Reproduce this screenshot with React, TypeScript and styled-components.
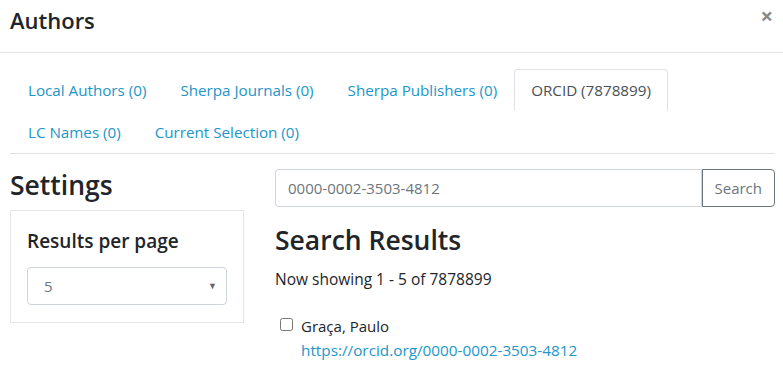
import styled, { createGlobalStyle } from "styled-components";

const Global = createGlobalStyle`
  body {
    margin: 0;
    background: #fff;
    font-family: "Open Sans", "Noto Sans", sans-serif;
    color: #212529;
  }
`;

const tabs = [
  ["Local Authors (0)", "Sherpa Journals (0)", "Sherpa Publishers (0)", "ORCID (7878899)"],
  ["LC Names (0)", "Current Selection (0)"],
];

export default function App() {
  return (
    <>
      <Global />
      <Modal>
        <Header>
          <Title>Authors</Title>
          <Close>×</Close>
        </Header>
        <Body>
          <Tabs>
            {tabs.map((row, i) => (
              <TabRow key={i}>
                {row.map((t) => (
                  <Tab key={t} $active={t.startsWith("ORCID")}>
                    {t}
                  </Tab>
                ))}
              </TabRow>
            ))}
          </Tabs>
          <Columns>
            <div>
              <Heading>Settings</Heading>
              <Card>
                <CardTitle>Results per page</CardTitle>
                <Select>
                  <span>5</span>
                  <Caret>▼</Caret>
                </Select>
              </Card>
            </div>
            <div>
              <SearchGroup>
                <SearchInput defaultValue="0000-0002-3503-4812" />
                <SearchButton>Search</SearchButton>
              </SearchGroup>
              <Heading>Search Results</Heading>
              <Showing>Now showing 1 - 5 of 7878899</Showing>
              <Result>
                <Check type="checkbox" />
                <div>
                  <Name>Graça, Paulo</Name>
                  <ResultLink href="#">https://orcid.org/0000-0002-3503-4812</ResultLink>
                </div>
              </Result>
            </div>
          </Columns>
        </Body>
      </Modal>
    </>
  );
}

const Modal = styled.div`
  width: 783px;
  height: 377px;
  overflow: hidden;
`;

const Header = styled.div`
  display: flex;
  justify-content: space-between;
  align-items: flex-start;
  height: 53px;
  padding: 0 10px;
  border-bottom: 1px solid #e5e5e5;
  box-sizing: border-box;
`;

const Title = styled.h5`
  margin: 4px 0 0;
  font-size: 22px;
  font-weight: 600;
  line-height: 32px;
`;

const Close = styled.span`
  font-size: 22px;
  line-height: 30px;
  font-weight: 700;
  color: #888;
`;

const Body = styled.div`
  padding: 16px 8px 0 10px;
`;

const Tabs = styled.div`
  border-bottom: 1px solid #dee2e6;
  padding-left: 1px;
`;

const TabRow = styled.div`
  display: flex;
`;

const Tab = styled.a<{ $active?: boolean }>`
  display: block;
  padding: 8px 16px;
  line-height: 24px;
  font-size: 15.2px;
  border: 1px solid ${(p) => (p.$active ? "#dee2e6" : "transparent")};
  border-bottom-color: transparent;
  border-radius: 4px 4px 0 0;
  color: ${(p) => (p.$active ? "#495057" : "#2196c9")};
  background: #fff;
`;

const Columns = styled.div`
  display: grid;
  grid-template-columns: 234px 1fr;
  gap: 31px;
  padding-top: 16px;
`;

const Heading = styled.h3`
  margin: 0 0 8px;
  font-size: 26.5px;
  font-weight: 600;
  line-height: 1.2;
`;

const Card = styled.div`
  border: 1px solid #e5e5e5;
  padding: 19px 16px 17px;
`;

const CardTitle = styled.h5`
  margin: 0 0 14px;
  font-size: 19px;
  font-weight: 600;
  line-height: 1.2;
`;

const Select = styled.div`
  display: flex;
  justify-content: space-between;
  align-items: center;
  height: 38px;
  padding: 0 9px 0 16px;
  border: 1px solid #ced4da;
  border-radius: 4px;
  box-sizing: border-box;
  color: #6c757d;
  font-size: 15px;
`;

const Caret = styled.span`
  font-size: 9px;
  color: #666;
`;

const SearchGroup = styled.div`
  display: flex;
  height: 38px;
  margin: -1px 0 18px;
`;

const SearchInput = styled.input`
  flex: 1;
  min-width: 0;
  border: 1px solid #ced4da;
  border-radius: 4px 0 0 4px;
  padding: 0 12px;
  font: inherit;
  font-size: 15px;
  color: #6c757d;
`;

const SearchButton = styled.button`
  border: 1px solid #6c757d;
  border-radius: 0 4px 4px 0;
  background: #fff;
  color: #6c757d;
  font: inherit;
  font-size: 15px;
  padding: 0 12px;
`;

const Showing = styled.p`
  margin: 11px 0 24px;
  font-size: 15.5px;
`;

const Result = styled.div`
  display: flex;
  gap: 8px;
  padding-left: 5px;
`;

const Check = styled.input`
  margin: 4px 0 0;
  width: 13px;
  height: 13px;
`;

const Name = styled.div`
  font-size: 15px;
  line-height: 24px;
`;

const ResultLink = styled.a`
  display: block;
  font-size: 15.3px;
  line-height: 24px;
  color: #2196c9;
  text-decoration: none;
`;
